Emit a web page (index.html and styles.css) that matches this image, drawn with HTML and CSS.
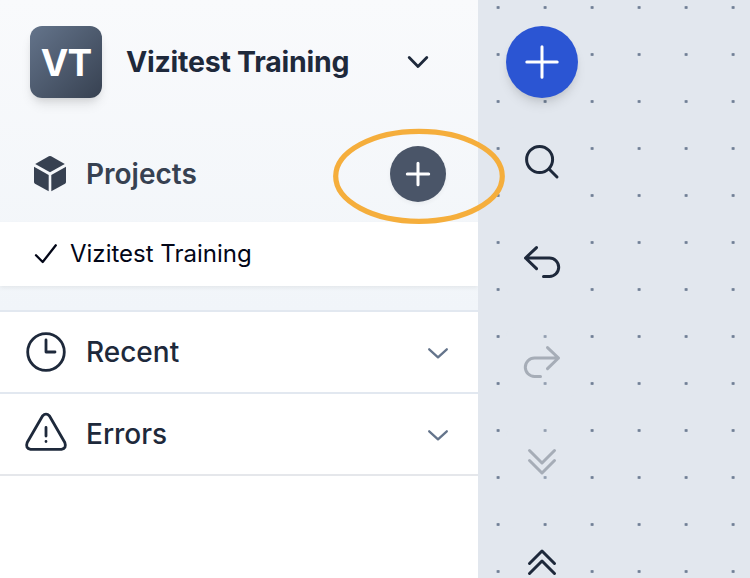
FILE: index.html
```html
<!DOCTYPE html>
<html lang="en">
<head>
<meta charset="utf-8">
<title>Vizitest Training</title>
<link rel="stylesheet" href="styles.css">
</head>
<body>
<div class="app">
  <aside class="sidebar">
    <div class="top">
      <header class="workspace">
        <div class="avatar">VT</div>
        <h1 class="workspace-name">Vizitest Training</h1>
        <svg class="workspace-chevron" width="24" height="16" viewBox="0 0 24 16"><path d="M3.2 3.500 12 12.500 20.800 3.500"/></svg>
      </header>
      <div class="projects-head">
        <svg class="cube" width="32" height="36" viewBox="0 0 32 36"><path d="M14.8.3Q16-.3 17.2.3L30.8 8 16 16.2 1.2 8Z"/><path d="M0 10.7 14.7 19V35.3L1 27.8Q0 27.2 0 26Z"/><path d="M32 10.7 17.3 19V35.3L31 27.8Q32 27.2 32 26Z"/></svg>
        <h2 class="projects-title">Projects</h2>
        <button class="add-project" aria-label="Add project"><svg width="56" height="56" viewBox="0 0 56 56"><path d="M28 17.3V38.7M17.3 28H38.7"/></svg></button>
      </div>
      <div class="project">
        <svg class="check" width="24" height="22" viewBox="0 0 24 22"><path d="M2 12.300 8.700 19 21.800 2.300"/></svg>
        <span class="project-name">Vizitest Training</span>
      </div>
    </div>
    <div class="section">
      <svg class="section-icon" width="44" height="44" viewBox="0 0 44 44"><circle cx="22" cy="22" r="18.3"/><path d="M22 10V22H31"/></svg>
      <span class="section-name">Recent</span>
      <svg class="chevron" width="24" height="16" viewBox="0 0 24 16"><path d="M3.2 5.300 12 13.300 20.800 5.300"/></svg>
    </div>
    <div class="section">
      <svg class="section-icon" width="44" height="44" viewBox="0 0 44 44"><path d="M18.500 4Q22 .2 25.500 4L40.800 30.500Q42.900 36.400 37.500 37.300H6.500Q1.100 36.400 3.200 30.500Z"/><path d="M22 15.500V24M22 29.500V29.600"/></svg>
      <span class="section-name">Errors</span>
      <svg class="chevron" width="24" height="16" viewBox="0 0 24 16"><path d="M3.2 5.300 12 13.300 20.800 5.300"/></svg>
    </div>
  </aside>
  <main class="canvas">
    <nav class="tools">
      <button class="tool primary" aria-label="Add"><svg width="72" height="72" viewBox="0 0 72 72"><path d="M36 20.800V51.200M20.800 36H51.200"/></svg></button>
      <button class="tool" aria-label="Search"><svg width="72" height="72" viewBox="0 0 72 72"><circle cx="33.600" cy="33.500" r="13"/><path d="M43 43 51 51"/></svg></button>
      <button class="tool" aria-label="Undo"><svg width="72" height="72" viewBox="0 0 72 72"><path d="M30.500 21.600 19.500 32 30.500 42.700M19.500 32H43.500A9.200 9.200 0 0 1 43.500 50.400H37.500"/></svg></button>
      <button class="tool disabled" aria-label="Redo"><svg width="72" height="72" viewBox="0 0 72 72"><path d="M41.500 21.600 52.500 32 41.500 42.700M52.500 32H28.500A9.200 9.200 0 0 0 28.500 50.400H34.500"/></svg></button>
      <button class="tool disabled" aria-label="Expand"><svg width="72" height="72" viewBox="0 0 72 72"><path d="M23.500 24.500 36 37 48.500 24.500M23.500 34.500 36 47 48.500 34.500"/></svg></button>
      <button class="tool" aria-label="Collapse"><svg width="72" height="72" viewBox="0 0 72 72"><path d="M23.500 37.500 36 25 48.500 37.500M23.500 47.500 36 35 48.500 47.500"/></svg></button>
    </nav>
  </main>
  <svg class="highlight" width="176" height="100" viewBox="0 0 176 100"><ellipse cx="88" cy="50.300" rx="83.300" ry="45"/></svg>
</div>
</body>
</html>
```
FILE: styles.css
```css
* { box-sizing: border-box; }
body { margin: 0; font-family: Inter, "Liberation Sans", sans-serif; color: #1e293b; }
h1, h2 { margin: 0; }
button { border: 0; padding: 0; background: none; }
svg { display: block; flex: none; fill: none; stroke: currentColor; stroke-linecap: round; stroke-linejoin: round; }
.app { position: relative; display: flex; width: 750px; height: 578px; overflow: hidden; }
.sidebar { width: 478px; flex: none; background: #fff; }
.top { height: 310px; background: linear-gradient(#f9fafc, #f1f5f9); }
.workspace { display: flex; align-items: center; height: 124px; padding: 0 48px 0 30px; }
.avatar { display: flex; align-items: center; justify-content: center; width: 72px; height: 72px; border-radius: 12px; background: linear-gradient(135deg, #64748b, #374151); color: #fff; font-size: 37px; font-weight: 700; letter-spacing: -.9px; box-shadow: 0 8px 12px -2px rgba(0,0,0,.1), 0 4px 8px -4px rgba(0,0,0,.12); }
.workspace-name { margin-left: 24px; font-size: 28.500px; line-height: 40px; font-weight: 750; letter-spacing: -.25px; white-space: nowrap; }
.workspace-chevron { margin-left: auto; stroke-width: 2.8; }
.projects-head { display: flex; align-items: center; height: 98px; padding: 2px 32px 0 34px; color: #374151; }
.cube { fill: currentColor; stroke: none; }
.projects-title { margin-left: 20px; font-size: 28px; line-height: 40px; font-weight: 600; }
.add-project { width: 56px; height: 56px; margin-left: auto; border-radius: 50%; background: #4a5568; color: #fff; box-shadow: 0 2px 4px rgba(0,0,0,.05); }
.add-project svg { stroke-width: 3; }
.project { display: flex; align-items: center; height: 64px; padding: 0 0 2px 34px; background: #fff; color: #020617; box-shadow: 0 2px 4px rgba(0,0,0,.06); }
.check { margin-top: 2px; stroke-width: 2.3; }
.project-name { margin-left: 12px; font-size: 24px; }
.section { display: flex; align-items: center; height: 82px; padding: 0 28px 0 24px; border-top: 2px solid #e2e8f0; }
.section:last-child { height: 84px; border-bottom: 2px solid #e5e7eb; }
.section-icon { stroke-width: 2.8; }
.section-name { margin-left: 18px; font-size: 28px; font-weight: 500; }
.chevron { margin-left: auto; color: #64748b; stroke-width: 2.3; }
.canvas { flex: 1; padding: 26px 28px; background: radial-gradient(circle at center, #718096 1.2px, transparent 2px) -3.400px -16px / 47px 47px #e2e7ee; }
.tools { display: flex; flex-direction: column; gap: 28px; }
.tool { width: 72px; height: 72px; flex: none; border-radius: 12px; background: #e2e7ee; color: #1e293b; stroke-width: 3; }
.primary { border-radius: 50%; background: #2b55d3; color: #fff; box-shadow: 0 8px 12px -2px rgba(0,0,0,.1), 0 4px 8px -4px rgba(0,0,0,.12); }
.disabled { opacity: .3; }
.highlight { position: absolute; left: 331px; top: 126px; color: #f5ae3c; stroke-width: 5.2; pointer-events: none; }
```
